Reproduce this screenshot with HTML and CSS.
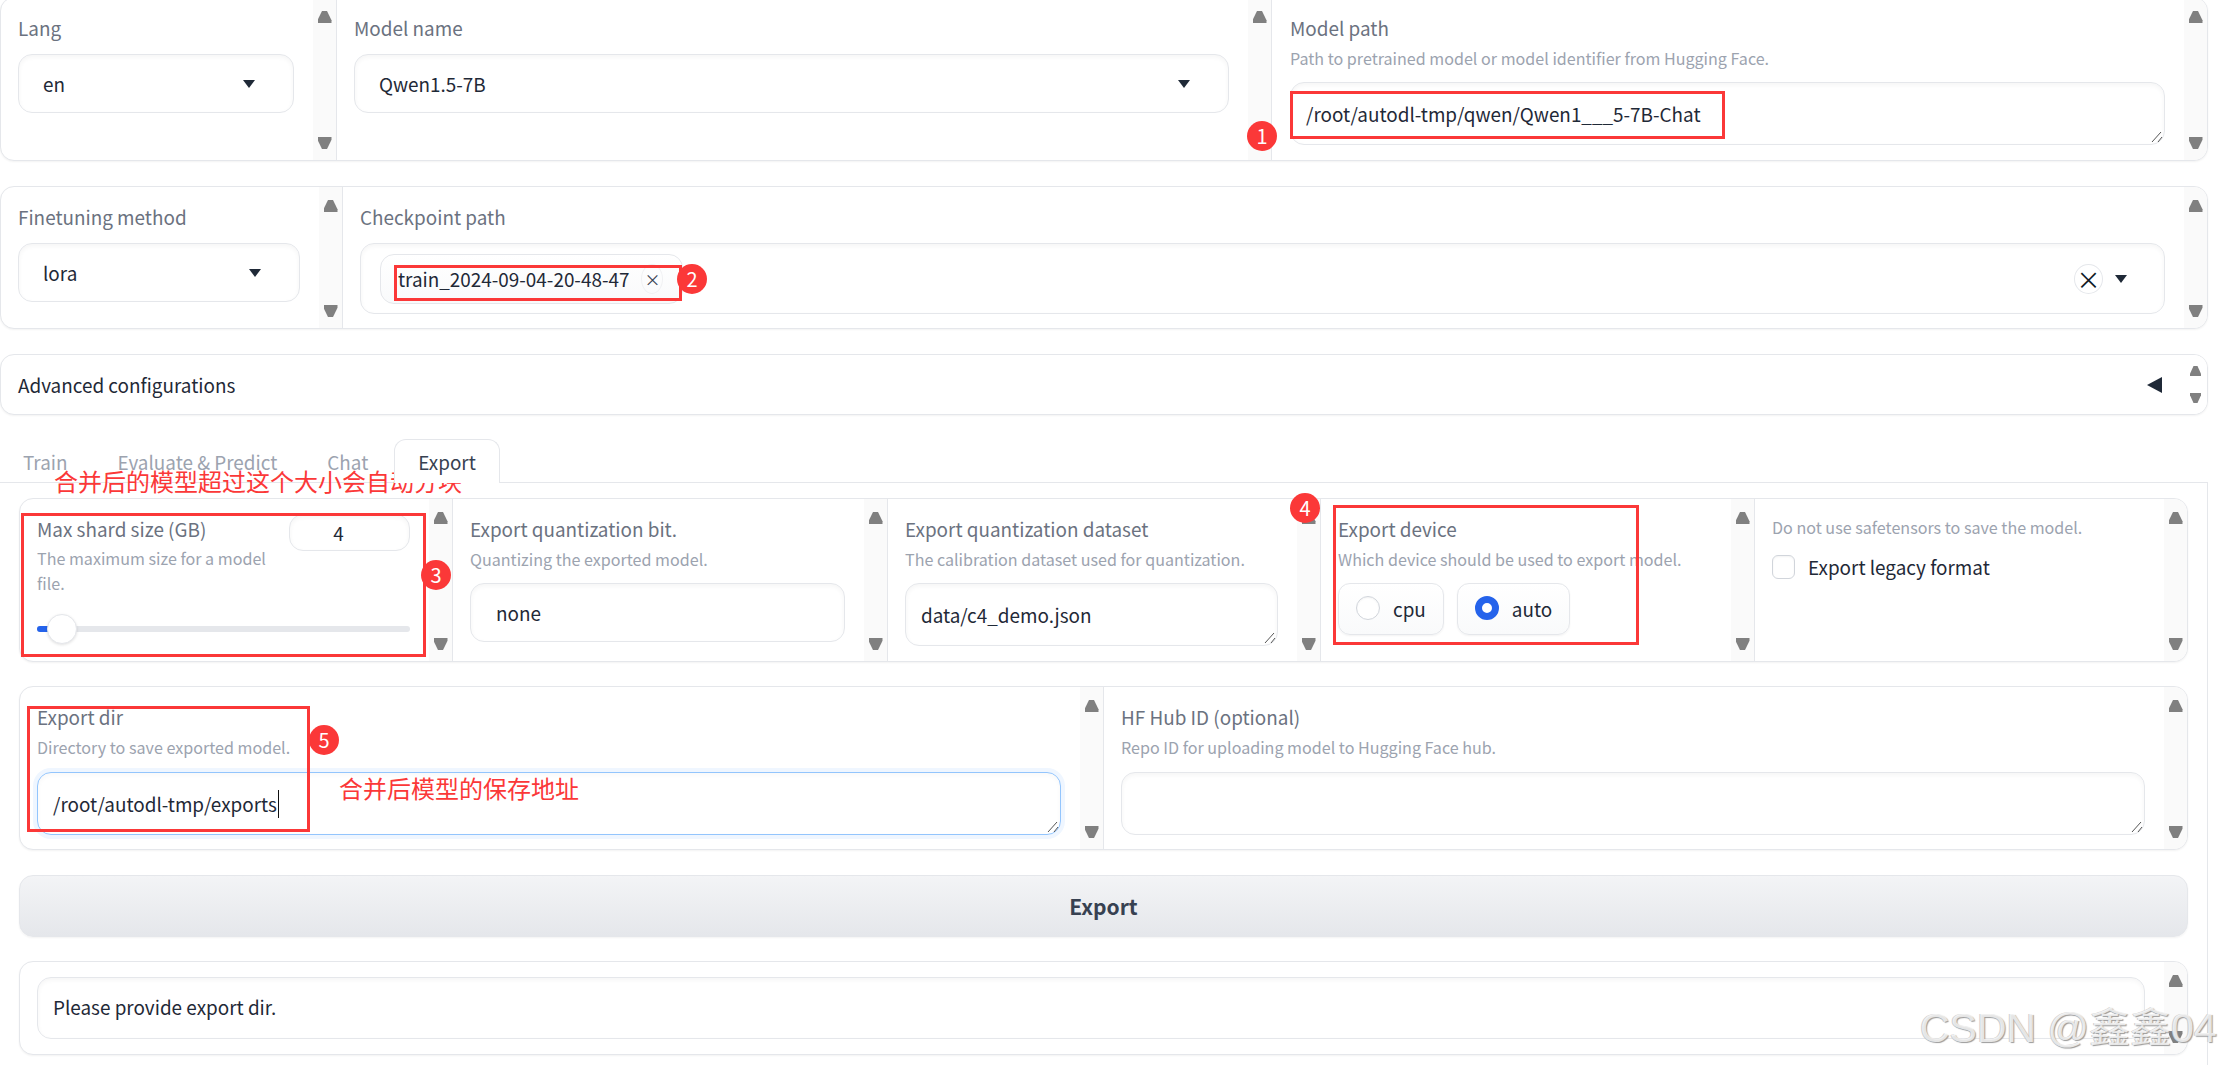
FILE: index.html
```html
<!DOCTYPE html>
<html lang="en">
<head>
<meta charset="utf-8">
<title>Export</title>
<link rel="stylesheet" href="styles.css">
</head>
<body>
<div class="page">
  <section class="card row-model">
    <div class="col c-lang">
      <div class="body"><div class="label">Lang</div><div class="field select"><span>en</span><i class="caret"></i></div></div>
      <div class="strip"><i class="up"></i><i class="down"></i></div>
    </div>
    <div class="col c-name">
      <div class="body"><div class="label">Model name</div><div class="field select"><span>Qwen1.5-7B</span><i class="caret"></i></div></div>
      <div class="strip"><i class="up"></i><i class="down"></i></div>
    </div>
    <div class="col grow last">
      <div class="body"><div class="label">Model path</div><div class="hint">Path to pretrained model or model identifier from Hugging Face.</div>
        <div class="field area hinted"><span>/root/autodl-tmp/qwen/Qwen1___5-7B-Chat</span><svg class="grip" viewBox="0 0 12 12"><path d="M1 11 10 1M7 11 11 6"/></svg></div></div>
      <div class="strip"><i class="up"></i><i class="down"></i></div>
    </div>
  </section>

  <section class="card row-ckpt">
    <div class="col c-method">
      <div class="body"><div class="label">Finetuning method</div><div class="field select"><span>lora</span><i class="caret"></i></div></div>
      <div class="strip"><i class="up"></i><i class="down"></i></div>
    </div>
    <div class="col grow last">
      <div class="body"><div class="label">Checkpoint path</div>
        <div class="field multi">
          <div class="tag"><span>train_2024-09-04-20-48-47</span><b class="tag-x">×</b></div>
          <div class="multi-end"><b class="clear">×</b><i class="caret"></i></div>
        </div></div>
      <div class="strip"><i class="up"></i><i class="down"></i></div>
    </div>
  </section>

  <section class="card row-adv">
    <div class="adv-text">Advanced configurations</div>
    <i class="adv-tri"></i>
    <div class="strip"><i class="up small"></i><i class="down small"></i></div>
  </section>

  <nav class="tabs">
    <div class="tab">Train</div>
    <div class="tab">Evaluate &amp; Predict</div>
    <div class="tab">Chat</div>
    <div class="tab active">Export</div>
  </nav>

  <div class="panel">
    <section class="card row-export">
      <div class="col c-shard">
        <div class="body">
          <div class="shard-head">
            <div class="shard-text"><div class="label">Max shard size (GB)</div><div class="hint wrap">The maximum size for a model file.</div></div>
            <div class="field number">4</div>
          </div>
          <div class="slider"><div class="fill"></div><div class="thumb"></div></div>
        </div>
        <div class="strip"><i class="up"></i><i class="down"></i></div>
      </div>
      <div class="col c-bit">
        <div class="body"><div class="label">Export quantization bit.</div><div class="hint">Quantizing the exported model.</div><div class="field select none"><span>none</span></div></div>
        <div class="strip"><i class="up"></i><i class="down"></i></div>
      </div>
      <div class="col c-set">
        <div class="body"><div class="label">Export quantization dataset</div><div class="hint">The calibration dataset used for quantization.</div>
          <div class="field area ds"><span>data/c4_demo.json</span><svg class="grip" viewBox="0 0 12 12"><path d="M1 11 10 1M7 11 11 6"/></svg></div></div>
        <div class="strip"><i class="up"></i><i class="down"></i></div>
      </div>
      <div class="col c-dev">
        <div class="body"><div class="label">Export device</div><div class="hint">Which device should be used to export model.</div>
          <div class="radios">
            <div class="chip"><i class="radio"></i><span>cpu</span></div>
            <div class="chip"><i class="radio on"></i><span>auto</span></div>
          </div></div>
        <div class="strip"><i class="up"></i><i class="down"></i></div>
      </div>
      <div class="col grow last">
        <div class="body"><div class="hint solo">Do not use safetensors to save the model.</div>
          <div class="check"><i class="box"></i><span>Export legacy format</span></div></div>
        <div class="strip"><i class="up"></i><i class="down"></i></div>
      </div>
    </section>

    <section class="card row-dir">
      <div class="col c-dir">
        <div class="body"><div class="label">Export dir</div><div class="hint">Directory to save exported model.</div>
          <div class="field area focus"><span>/root/autodl-tmp/exports</span><i class="cursor"></i><svg class="grip" viewBox="0 0 12 12"><path d="M1 11 10 1M7 11 11 6"/></svg></div></div>
        <div class="strip"><i class="up"></i><i class="down"></i></div>
      </div>
      <div class="col grow last">
        <div class="body"><div class="label">HF Hub ID (optional)</div><div class="hint">Repo ID for uploading model to Hugging Face hub.</div>
          <div class="field area"><svg class="grip" viewBox="0 0 12 12"><path d="M1 11 10 1M7 11 11 6"/></svg></div></div>
        <div class="strip"><i class="up"></i><i class="down"></i></div>
      </div>
    </section>

    <button class="export-btn">Export</button>

    <section class="card row-out">
      <div class="col grow last">
        <div class="body out"><div class="field area"><span>Please provide export dir.</span></div></div>
        <div class="strip"><i class="up"></i><i class="down"></i></div>
      </div>
    </section>
  </div>

  <div class="box-mark m1"></div>
  <div class="box-mark m2"></div>
  <div class="box-mark m3"></div>
  <div class="box-mark m4"></div>
  <div class="box-mark m5"></div>
  <div class="badge b1">1</div>
  <div class="badge b2">2</div>
  <div class="badge b3">3</div>
  <div class="badge b4">4</div>
  <div class="badge b5">5</div>
  <div class="note n1">合并后的模型超过这个大小会自动分块</div>
  <div class="note n2">合并后模型的保存地址</div>
  <div class="watermark">CSDN @鑫鑫04</div>
</div>
</body>
</html>
```
FILE: styles.css
```css
* { box-sizing: border-box; }
html, body { margin: 0; height: 1065px; overflow: hidden; background: #fff; }
body { font-family: "Noto Sans CJK SC", "Noto Sans", sans-serif; font-size: 18.9px; color: #1f2937; }
i { display: block; font-style: normal; }
b { font-weight: 400; }

.page { position: relative; width: 2208px; height: 1065px; display: flex; flex-direction: column; }

.card { display: flex; background: #fff; border: 1px solid #e5e7eb; border-radius: 14px; box-shadow: 0 1px 2px rgba(0,0,0,.05); overflow: hidden; flex: none; }
.col { display: flex; border-right: 1px solid #e5e7eb; flex: none; }
.col.grow { flex: 1; min-width: 0; }
.col.last { border-right: 0; }
.body { flex: 1; min-width: 0; padding: 18px 19px 0 17px; }
.strip { width: 23px; flex: none; background: #fafafa; display: flex; flex-direction: column; justify-content: space-between; align-items: center; padding: 13px 0 11px; }
.up, .down { width: 14px; height: 12px; background: #808080; }
.up { clip-path: polygon(32% 0, 68% 0, 100% 78%, 100% 100%, 0 100%, 0 78%); }
.down { clip-path: polygon(0 0, 100% 0, 100% 22%, 68% 100%, 32% 100%, 0 22%); }
.up.small, .down.small { width: 11px; height: 10px; }

.label { height: 24px; line-height: 23px; color: #6b7280; font-size: 18.9px; }
.hint { height: 24px; line-height: 24px; margin-top: 6px; color: #9ca3af; font-size: 16.1px; white-space: nowrap; }
.hint.wrap { white-space: normal; height: auto; line-height: 25px; margin-top: 5px; }
.hint.solo { margin-top: -2px; }

.field { position: relative; margin-top: 14px; border: 1px solid #e5e7eb; border-radius: 14px; background: #fff; box-shadow: inset 0 2px 5px rgba(0,0,0,.045); display: flex; align-items: center; font-size: 18.9px; color: #1f2937; }
.select { height: 59px; padding: 0 38px 0 24px; justify-content: space-between; }
.caret { width: 0; height: 0; border-left: 6.5px solid transparent; border-right: 6.5px solid transparent; border-top: 8px solid #1f2937; }
.area { height: 62px; padding: 0 15px; }
.hinted, .ds { margin-top: 12px; height: 63px; }
.row-dir .area { margin-top: 13px; height: 63px; }
.grip { position: absolute; right: 1px; bottom: 1px; width: 12px; height: 12px; fill: none; stroke: #555; stroke-width: 1; }
.focus { border-color: #93c5fd; box-shadow: 0 0 0 4px #eff6ff, inset 0 2px 5px rgba(0,0,0,.03); }
.cursor { width: 1px; height: 28px; background: #111; margin-left: 1px; }

.row-model { margin-top: -3px; height: 164px; width: 2208px; }
.row-model .last .body { padding-left: 18px; }
.c-lang { width: 336px; }
.c-name { width: 935px; }
.row-ckpt { margin-top: 25px; height: 143px; width: 2208px; }
.c-method { width: 342px; }
.multi { height: 71px; padding: 0 0 0 19px; justify-content: space-between; }
.tag { display: flex; align-items: center; height: 50px; width: 303px; border: 1px solid #e5e7eb; border-radius: 14px; padding: 0 0 0 17px; background: linear-gradient(#fff, #f9fafb); white-space: nowrap; }
.tag-x { display: flex; align-items: center; justify-content: center; width: 22px; height: 30px; border: 1px solid #f0f1f3; border-radius: 50%; margin-left: 12px; font-size: 16px; color: #374151; }
.multi-end { display: flex; align-items: center; gap: 12px; padding-right: 37px; }
.clear { display: flex; align-items: center; justify-content: center; width: 29px; height: 30px; border: 1px solid #e5e7eb; border-radius: 50%; font-size: 24px; color: #111827; line-height: 1; }

.row-adv { margin-top: 25px; height: 61px; width: 2208px; align-items: center; }
.adv-text { flex: 1; padding-left: 17px; }
.adv-tri { width: 0; height: 0; border-top: 8px solid transparent; border-bottom: 8px solid transparent; border-right: 15px solid #1f2937; margin-right: 22px; }
.row-adv .strip { height: 100%; padding: 11px 0; background: #fff; }

.tabs { display: flex; gap: 2px; height: 43px; margin-top: 24px; margin-left: -1px; flex: none; }
.tab { height: 43px; line-height: 44px; padding: 0 23px; color: #9ca3af; border: 1px solid transparent; border-bottom: 0; white-space: nowrap; }
.tab.active { color: #374151; border-color: #e5e7eb; border-radius: 12px 12px 0 0; background: #fff; margin-bottom: -1px; height: 44px; position: relative; z-index: 1; }

.panel { flex: none; border-top: 1px solid #e5e7eb; border-right: 1px solid #e5e7eb; padding: 15px 19px 0 19px; display: flex; flex-direction: column; height: 600px; width: 2208px; }
.row-export { height: 164px; }
.c-shard { width: 433px; }
.c-bit { width: 435px; }
.c-set { width: 433px; }
.c-dev { width: 434px; }
.shard-head { display: flex; justify-content: space-between; }
.shard-text { width: 245px; }
.number { width: 121px; height: 37px; margin-top: -3px; justify-content: center; padding-right: 22px; }
.slider { position: relative; height: 6px; margin-top: 30px; background: #e5e7eb; border-radius: 3px; }
.fill { width: 18px; height: 6px; background: #2563eb; border-radius: 3px 0 0 3px; }
.thumb { position: absolute; left: 10px; top: -12px; width: 30px; height: 30px; border-radius: 50%; background: #fff; border: 1px solid #e5e7eb; box-shadow: 0 1px 3px rgba(0,0,0,.12); }
.none { margin-top: 12px; padding-left: 25px; }
.radios { display: flex; gap: 13px; margin-top: 12px; }
.chip { display: flex; align-items: center; gap: 13px; height: 52px; padding: 0 17px 2px; border: 1px solid #e5e7eb; border-radius: 12px; background: linear-gradient(#fff, #f9fafb); box-shadow: 0 1px 2px rgba(0,0,0,.05); }
.radio { width: 24px; height: 24px; border-radius: 50%; border: 1px solid #d1d5db; background: #fff; box-shadow: inset 0 1px 2px rgba(0,0,0,.05); }
.radio.on { background: #fff; border: 7px solid #2563eb; box-shadow: none; }
.check { display: flex; align-items: center; gap: 13px; margin-top: 14px; }
.box { width: 23px; height: 24px; border-radius: 6px; border: 1px solid #d1d5db; background: #fff; box-shadow: inset 0 1px 2px rgba(0,0,0,.05); }

.row-dir { margin-top: 24px; height: 164px; }
.c-dir { width: 1084px; }
.export-btn { flex: none; margin-top: 25px; height: 62px; width: 100%; padding-bottom: 2px; border: 1px solid #e5e7eb; border-radius: 14px; background: linear-gradient(#f3f4f6, #e5e7eb); font: 600 21px "Noto Sans CJK SC", "Noto Sans", sans-serif; color: #374151; box-shadow: 0 1px 2px rgba(0,0,0,.05); }
.row-out { margin-top: 24px; height: 94px; }
.out { padding-top: 15px; }
.out .field { margin-top: 0; padding-bottom: 3px; }

.box-mark { position: absolute; border: 3px solid #fb3838; }
.m1 { left: 1290px; top: 91px; width: 435px; height: 48px; }
.m2 { left: 394px; top: 265px; width: 288px; height: 36px; }
.m3 { left: 21px; top: 513px; width: 405px; height: 144px; }
.m4 { left: 1333px; top: 505px; width: 306px; height: 140px; }
.m5 { left: 27px; top: 706px; width: 283px; height: 126px; }
.badge { position: absolute; width: 30px; height: 30px; border-radius: 50%; background: #fb3838; color: #fff; font-size: 20px; line-height: 30px; text-align: center; }
.b1 { left: 1247px; top: 121px; }
.b2 { left: 677px; top: 264px; }
.b3 { left: 421px; top: 560px; }
.b4 { left: 1290px; top: 493px; }
.b5 { left: 309px; top: 725px; }
.note { position: absolute; color: #fb3838; font-size: 24px; line-height: 30px; white-space: nowrap; }
.n1 { left: 54px; top: 466px; }
.n2 { left: 339px; top: 773px; }
.watermark { position: absolute; left: 1920px; top: 1006px; font-family: "Liberation Sans", "Noto Sans CJK SC", sans-serif; font-size: 41px; line-height: 44px; white-space: nowrap; color: rgba(255,255,255,.75); text-shadow: 1px 1px 1px #9a9a9a, -1px 0 0 #d0d0d0; }
```
